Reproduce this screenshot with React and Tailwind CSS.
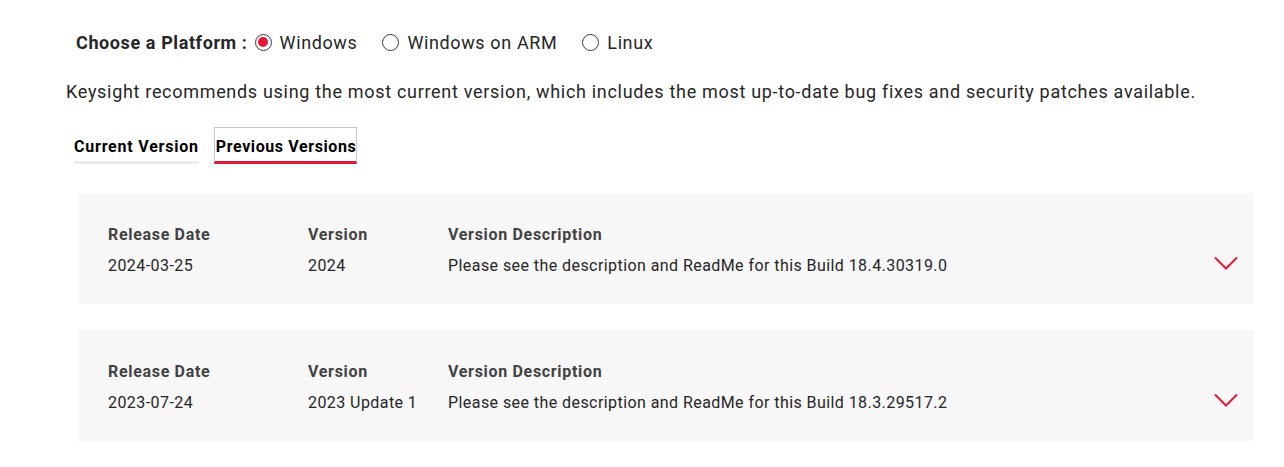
import { useState } from "react";

const platforms = ["Windows", "Windows on ARM", "Linux"];

const releases = [
  {
    date: "2024-03-25",
    version: "2024",
    description: "Please see the description and ReadMe for this Build 18.4.30319.0",
  },
  {
    date: "2023-07-24",
    version: "2023 Update 1",
    description: "Please see the description and ReadMe for this Build 18.3.29517.2",
  },
  {
    date: "2023-01-16",
    version: "2023",
    description: "Please see the description and ReadMe for this Build 18.2.28000.0",
  },
];

function Chevron() {
  return (
    <svg width="24" height="15" viewBox="0 0 24 15" fill="none">
      <path d="M1 1.5 L12 12.5 L23 1.5" stroke="#e31837" strokeWidth="2" />
    </svg>
  );
}

export default function App() {
  const [platform, setPlatform] = useState("Windows");
  const [tab, setTab] = useState("previous");

  return (
    <div
      className="w-[1284px] h-[467px] overflow-hidden bg-white text-[#262626] pt-[29px]"
      style={{ fontFamily: "Roboto, 'Liberation Sans', sans-serif" }}
    >
      <div className="pl-[76px] flex items-center h-[26px] text-[18px] tracking-[0.62px]">
        <span className="font-bold mr-[7px] tracking-[0.6px]">Choose a Platform :</span>
        {platforms.map((p) => (
          <label key={p} className="flex items-center mr-[25px] cursor-pointer">
            <span className="w-[17px] h-[17px] rounded-full border border-[#3a3a3a] flex items-center justify-center mr-[8px]">
              {platform === p && <span className="w-[10px] h-[10px] rounded-full bg-[#e31837]" />}
            </span>
            <input
              type="radio"
              className="hidden"
              checked={platform === p}
              onChange={() => setPlatform(p)}
            />
            {p}
          </label>
        ))}
      </div>

      <p className="pl-[66px] mt-[24px] text-[18px] leading-[26px] tracking-[0.69px]">
        Keysight recommends using the most current version, which includes the most up-to-date bug fixes and security patches available.
      </p>

      <div className="flex pl-[74px] mt-[22px] gap-[15px] text-[16px] font-bold text-black">
        <button
          onClick={() => setTab("current")}
          className={`h-[37px] pt-[5px] tracking-[0.78px] border-b-[3px] ${tab === "current" ? "border-[#e31837]" : "border-[#ebebeb]"}`}
        >
          Current Version
        </button>
        <button
          onClick={() => setTab("previous")}
          className={`h-[37px] pt-[4px] pl-[1px] pr-0 tracking-[0.6px] border border-[#c8c8c8] border-b-[3px] ${tab === "previous" ? "border-b-[#e31837]" : "border-b-[#ebebeb]"}`}
        >
          Previous Versions
        </button>
      </div>

      <div className="ml-[78px] w-[1176px] mt-[29px] flex flex-col gap-[26px]">
        {releases.map((r) => (
          <div key={r.date} className="bg-[#f7f7f7] h-[111px] flex items-start pl-[30px] pr-[16px] pt-[32px]">
            <div className="flex-1 flex flex-col gap-[10px]">
              <div className="flex font-bold text-[#424242] text-[16px] leading-[20px] tracking-[0.68px]">
                <span className="w-[200px]">Release Date</span>
                <span className="w-[140px]">Version</span>
                <span>Version Description</span>
              </div>
              <div className="flex text-[16px] leading-[22px] tracking-[0.43px]">
                <span className="w-[200px]">{r.date}</span>
                <span className="w-[140px]">{r.version}</span>
                <span>{r.description}</span>
              </div>
            </div>
            <div className="pt-[31px]">
              <Chevron />
            </div>
          </div>
        ))}
      </div>
    </div>
  );
}
